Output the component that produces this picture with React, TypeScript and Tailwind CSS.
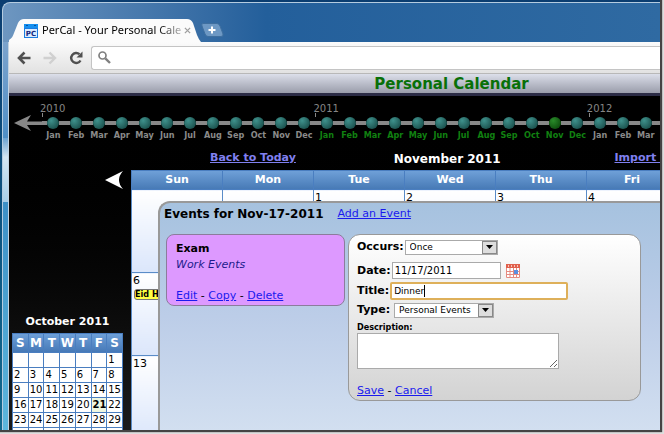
import { useState } from "react";

const MONTHS = ["Jan", "Feb", "Mar", "Apr", "May", "Jun", "Jul", "Aug", "Sep", "Oct", "Nov", "Dec"];
const FIRST_YEAR = 2010;
const TIMELINE = Array.from({ length: 28 }, (_, i) => ({
  label: MONTHS[i % 12],
  year: FIRST_YEAR + Math.floor(i / 12),
  isFirst: i % 12 === 0,
}));

const WEEKDAYS = ["Sun", "Mon", "Tue", "Wed", "Thu", "Fri", "Sat"];
const WEEKS = [
  [null, null, 1, 2, 3, 4, 5],
  [6, 7, 8, 9, 10, 11, 12],
  [13, 14, 15, 16, 17, 18, 19],
];

const MINI_WEEKS = [
  [null, null, null, null, null, null, 1],
  [2, 3, 4, 5, 6, 7, 8],
  [9, 10, 11, 12, 13, 14, 15],
  [16, 17, 18, 19, 20, 21, 22],
  [23, 24, 25, 26, 27, 28, 29],
  [30, 31, null, null, null, null, null],
];

function TabStrip() {
  return (
    <div className="flex h-[39px] shrink-0 items-end pl-1.5">
      <div className="relative h-[23px] w-48 shrink-0">
        <svg viewBox="0 0 192 23" className="absolute inset-0 h-full w-full" aria-hidden="true">
          <path d="M0 23V21C3 19 4 17 5 14L9 4 Q11 0 15 0 H178 Q182 0 184 4L188 16Q190 21 192 23Z" fill="#fbfbfb" />
        </svg>
        <div className="relative flex h-full items-center pl-[15px]">
          <svg viewBox="0 0 14 14" className="h-3.5 w-3.5 shrink-0" aria-hidden="true">
            <rect width="14" height="14" fill="#1b7be0" />
            <rect x="0" y="0" width="14" height="4" fill="#1590f0" />
            <rect x="2" y="1" width="2" height="1" fill="#0a4f9c" />
            <rect x="10" y="1" width="2" height="1" fill="#0a4f9c" />
            <rect x="1" y="5" width="12" height="8" fill="#d8ecff" />
            <text x="7" y="12" textAnchor="middle" fontSize="7" fontWeight="bold" fontFamily="DejaVu Sans" fill="#14247c">PC</text>
          </svg>
          <span className="ml-1 bg-linear-to-r from-black from-80% to-[#bbb] bg-clip-text font-['Noto_Sans','Open_Sans',sans-serif] text-[11px] whitespace-nowrap text-transparent">
            PerCal - Your Personal Cale
          </span>
          <button aria-label="Close tab" className="mr-2.5 ml-auto">
            <svg viewBox="0 0 8 8" className="h-[7px] w-[7px]" stroke="#a0a0a0" strokeWidth="1.5">
              <path d="M1 1l6 6M7 1l-6 6" />
            </svg>
          </button>
        </div>
      </div>
      <button aria-label="New tab" className="mb-[5px] h-[14px] w-[23px]">
        <svg viewBox="0 0 23 14" className="h-full w-full">
          <path d="M2 .5H16Q18 .5 19 3L22 11Q22.500 13.500 20 13.500H7Q5 13.500 4 11L1 3Q0 .5 2 .5Z" fill="#6d98c4" stroke="#3f6f9f" />
          <path d="M11 3.500v7M7.500 7h7" stroke="#fff" strokeWidth="2" />
        </svg>
      </button>
    </div>
  );
}

function Toolbar() {
  return (
    <div className="flex h-8 shrink-0 items-center border-b border-[#b8b8b8] bg-linear-to-b from-[#fbfbfb] to-[#e2e2e2] pl-2">
      <button aria-label="Back">
        <svg viewBox="0 0 14 14" className="h-3.5 w-3.5" fill="none" stroke="#505050" strokeWidth="2.600">
          <path d="M7.500 1.500L2 7l5.500 5.500M2 7h11.500" />
        </svg>
      </button>
      <button aria-label="Forward" className="ml-3">
        <svg viewBox="0 0 14 14" className="h-3.5 w-3.5" fill="none" stroke="#d0d0d0" strokeWidth="2.400">
          <path d="M6.500 1.500L12 7l-5.500 5.500M12 7H.5" />
        </svg>
      </button>
      <button aria-label="Reload" className="ml-3">
        <svg viewBox="0 0 14 14" className="h-3.5 w-3.5">
          <path d="M11.500 9.500A5 5 0 1 1 10.500 3.200" fill="none" stroke="#505050" strokeWidth="2.400" />
          <path d="M13.500 .5V6.500H7.500Z" fill="#505050" />
        </svg>
      </button>
      <label className="ml-2 flex h-6 flex-1 items-center rounded-l-[3px] border-y border-l border-[#c4c4c4] bg-white pl-1.5">
        <svg viewBox="0 0 13 13" className="h-[13px] w-[13px]" fill="none" stroke="#808080">
          <circle cx="4.500" cy="4.500" r="3.500" strokeWidth="1.700" />
          <path d="M7.300 7.300L12 12" strokeWidth="2.400" />
        </svg>
        <input aria-label="Address" className="ml-1 min-w-0 flex-1 text-xs outline-none" />
      </label>
    </div>
  );
}

function Timeline() {
  return (
    <div className="flex h-[49px] shrink-0 overflow-hidden pl-[5px]">
      <button aria-label="Earlier months" className="mt-[19px] h-4 w-7 shrink-0">
        <svg viewBox="0 0 28 16" className="h-full w-full" fill="#888">
          <path d="M0 8L17 0 13 6.500H28V10H13L17 16Z" />
        </svg>
      </button>
      <ol className="-mr-5 grid flex-1 grid-cols-[repeat(28,minmax(0,1fr))] font-['DejaVu_Sans_Condensed','DejaVu_Sans',sans-serif]">
        {TIMELINE.map((m, i) => (
          <li key={i} className="flex flex-col">
            <div className="-ml-0.5 h-[21px] pt-[7px] font-['DejaVu_Sans',sans-serif] text-[10px] leading-3 whitespace-nowrap text-[#858585]">
              {m.isFirst && m.year}
            </div>
            <div className={m.isFirst ? "-mt-1 h-1 w-px bg-[#888]" : "-mt-1 h-1"} />
            <div className="flex h-3 items-center">
              <span className="h-1 flex-1 bg-[#888]" />
              <span
                className={
                  i === 22
                    ? "h-3 w-3 rounded-full bg-radial-[at_35%_30%] from-[#2a8a2a] to-[#053c05]"
                    : "h-3 w-3 rounded-full bg-radial-[at_35%_30%] from-[#3f918c] to-[#103e3b]"
                }
              />
              <span className="h-1 flex-1 bg-[#888]" />
            </div>
            <a
              href="#month"
              className={
                m.year === 2011
                  ? "text-center text-[9px] leading-3 font-bold text-[#118011]"
                  : "text-center text-[9px] leading-3 font-bold text-[#8a8a8a]"
              }
            >
              {m.label}
            </a>
          </li>
        ))}
      </ol>
    </div>
  );
}

function MiniCalendar() {
  return (
    <table className="w-full table-fixed border-collapse text-[10px] leading-3">
      <caption className="pb-[3px] text-center text-[11px] leading-4 font-bold text-white">October 2011</caption>
      <thead>
        <tr className="h-[19px] bg-linear-to-b from-[#6d9fd8] to-[#4477b5] text-xs text-white">
          {WEEKDAYS.map((d) => (
            <th key={d} className="border border-[#4a7ec0] p-0 font-bold">{d[0]}</th>
          ))}
        </tr>
      </thead>
      <tbody className="bg-white">
        {MINI_WEEKS.map((week, i) => (
          <tr key={i} className="h-[15px]">
            {week.map((day, j) => (
              <td
                key={j}
                className={
                  day === 21
                    ? "border border-[#4a7ec0] bg-[#eef6e0] p-0 pl-px font-bold"
                    : "border border-[#4a7ec0] p-0 pl-px"
                }
              >
                {day}
              </td>
            ))}
          </tr>
        ))}
      </tbody>
    </table>
  );
}

function MonthGrid() {
  return (
    <table className="w-[calc(100%+109px)] table-fixed border-collapse text-[11px] leading-4">
      <thead>
        <tr className="h-[19px] bg-linear-to-b from-[#6fa0d8] to-[#4578b4] text-white">
          {WEEKDAYS.map((d) => (
            <th key={d} className="border border-[#4a7ec0] p-0 font-bold">{d}</th>
          ))}
        </tr>
      </thead>
      <tbody>
        {WEEKS.map((week, i) => (
          <tr key={i} className="h-[83px]">
            {week.map((day, j) => (
              <td key={j} className="border border-[#5a8cc8] bg-linear-to-b from-white to-[#dbe6fb] p-0 pl-px align-top">
                {day}
                {day === 6 && (
                  <a href="#eid" className="mr-1 ml-px block rounded-[3px] border border-[#777] bg-[#ffff44] font-['DejaVu_Sans_Condensed','DejaVu_Sans',sans-serif] text-[9px] leading-[9px] font-bold whitespace-nowrap">
                    Eid Holiday
                  </a>
                )}
              </td>
            ))}
          </tr>
        ))}
      </tbody>
    </table>
  );
}

type SelectFieldProps = {
  id: string;
  options: string[];
  className: string;
};

function SelectField({ id, options, className }: SelectFieldProps) {
  return (
    <span className={`relative flex h-[15px] border border-[#aaa] bg-white ${className}`}>
      <select id={id} className="w-full appearance-none pl-1 text-[9px] leading-3 outline-none">
        {options.map((o) => (
          <option key={o}>{o}</option>
        ))}
      </select>
      <span className="pointer-events-none absolute inset-y-0 right-0 flex w-[15px] items-center justify-center border border-[#888] bg-[#ddd]">
        <svg viewBox="0 0 7 4" className="h-1 w-[7px]">
          <path d="M0 0h7L3.500 4Z" fill="#000" />
        </svg>
      </span>
    </span>
  );
}

function EventForm() {
  const [date, setDate] = useState("11/17/2011");
  const [title, setTitle] = useState("Dinner");

  return (
    <form className="h-[167px] w-[293px] rounded-xl border border-[#999] bg-linear-to-b from-white to-[#d3d3d3] px-2 pt-1 text-[11px] leading-4">
      <div className="flex items-center gap-px">
        <label htmlFor="occurs" className="font-bold">Occurs:</label>
        <SelectField id="occurs" options={["Once", "Weekly", "Monthly"]} className="w-[93px]" />
      </div>
      <div className="mt-[7px] flex items-center gap-px">
        <label htmlFor="date" className="font-bold">Date:</label>
        <input id="date" value={date} onChange={(e) => setDate(e.target.value)} className="h-[17px] w-[109px] border border-[#aaa] bg-white px-0.5 text-[10px] outline-none" />
        <button type="button" aria-label="Pick a date" className="ml-1">
          <svg viewBox="0 0 14 14" className="h-3.5 w-3.5">
            <rect width="14" height="14" fill="#fff" />
            <rect width="14" height="4" fill="#e0604c" />
            <path d="M.5 4v9.500h13V4M.5 7.500h13M.5 10.500h13M4 4v10M7.500 4v10M10.500 4v10" fill="none" stroke="#e58a80" />
            <path d="M2.500 1v2M5.500 1v2M8.500 1v2M11.500 1v2" stroke="#f6c4bc" />
            <rect x="8" y="6" width="4" height="4" fill="#5a8ee0" />
          </svg>
        </button>
      </div>
      <div className="mt-[3px] flex items-center gap-px">
        <label htmlFor="title" className="font-bold">Title:</label>
        <span className="flex h-[18px] w-[178px] items-center rounded-[2px] border-2 border-[#deb05a] bg-white pl-0.5">
          <input id="title" value={title} onChange={(e) => setTitle(e.target.value)} className="field-sizing-content text-[9px] outline-none" />
          <span className="h-3 w-px bg-black" />
        </span>
      </div>
      <div className="mt-0.5 flex items-center gap-1">
        <label htmlFor="type" className="font-bold">Type:</label>
        <SelectField id="type" options={["Personal Events", "Work Events"]} className="w-[100px]" />
      </div>
      <label htmlFor="description" className="mt-[3px] block font-['DejaVu_Sans_Condensed','DejaVu_Sans',sans-serif] text-[9px] leading-3 font-bold">
        Description:
      </label>
      <textarea id="description" className="block h-9 w-[202px] resize border border-[#aaa] bg-white" />
      <div className="mt-3.5">
        <a href="#save" className="text-[#1a1aee] underline">Save</a> - <a href="#cancel" className="text-[#1a1aee] underline">Cancel</a>
      </div>
    </form>
  );
}

function EventsPopup() {
  return (
    <section className="absolute top-[31px] -right-3 bottom-0 left-[27px] rounded-tl-xl border-t-2 border-l-2 border-[#999] bg-linear-to-b from-[#a6c2df] via-[#bccde8] to-[#d2dff0] px-1 pt-[3px]">
      <div className="flex items-center gap-3.5">
        <h2 className="text-xs leading-4 font-bold">Events for Nov-17-2011</h2>
        <a href="#add" className="text-[11px] leading-4 text-[#1a1aee] underline">Add an Event</a>
      </div>
      <div className="mt-3 flex items-start gap-[3px] pl-0.5">
        <article className="h-[72px] w-[179px] shrink-0 rounded-lg border border-[#8c7c9c] bg-[#dd99ff] px-[9px] pt-1.5 text-[11px] leading-4">
          <h3 className="font-bold">Exam</h3>
          <p className="text-[#1c1c8c] italic">Work Events</p>
          <p className="mt-[15px]">
            <a href="#edit" className="text-[#1a1aee] underline">Edit</a> - <a href="#copy" className="text-[#1a1aee] underline">Copy</a> -{" "}
            <a href="#delete" className="text-[#1a1aee] underline">Delete</a>
          </p>
        </article>
        <EventForm />
      </div>
    </section>
  );
}

export default function App() {
  return (
    <div className="h-screen overflow-hidden bg-[#dedede] pr-1 pb-1 font-['DejaVu_Sans',Verdana,sans-serif] text-black">
      <div className="h-full bg-linear-to-b from-[#0b3d70] to-[#12698e] pt-0.5 pl-0.5 shadow-[1px_1px_1px_1px_#444]">
        <div className="flex h-full flex-col overflow-hidden rounded-tl-lg border-t border-l border-[#b5cce0] bg-linear-to-r from-[#6d96c0] via-[#235f9b] via-40% to-[#2f6aa2]">
          <TabStrip />
          <div className="flex min-h-0 flex-1">
            <div className="flex w-1.5 shrink-0 flex-col border-r border-[#c4d4e2]">
              <div className="h-24 bg-linear-to-b from-[#7ba3cd] to-[#4f8fc6]" />
              <div className="h-16 bg-linear-to-b from-[#6aa2d0] via-[#d4e6f2] via-30% to-[#a8cfe8]" />
              <div className="flex-1 bg-linear-to-b from-[#3d90c6] to-[#5cb6dc]" />
            </div>
            <div className="flex min-w-0 flex-1 flex-col">
              <Toolbar />
              <header className="h-[22px] shrink-0 border-b-3 border-[#2b2b45] bg-linear-to-b from-[#dcdfea] to-[#9a9dab] text-center">
                <h1 className="pl-[234px] text-[15px] leading-5 font-bold text-[#087008]">Personal Calendar</h1>
              </header>
              <main className="flex min-h-0 flex-1 flex-col bg-linear-to-b from-black to-[#1c1c1c]">
                <Timeline />
                <div className="flex min-h-0 flex-1">
                  <aside className="flex w-[122px] shrink-0 flex-col overflow-hidden">
                    <button aria-label="Previous month" className="mt-[26px] mr-2 h-[18px] w-[18px] shrink-0 self-end">
                      <svg viewBox="0 0 18 18" className="h-full w-full" fill="#fff">
                        <path d="M0 9L18 0Q10 9 18 18Z" />
                      </svg>
                    </button>
                    <div className="mt-[125px] pr-2 pl-[3px]">
                      <MiniCalendar />
                    </div>
                  </aside>
                  <div className="flex min-w-0 flex-1 flex-col overflow-hidden">
                    <nav className="flex h-[25px] shrink-0 items-center pt-0.5 text-[11px] font-bold whitespace-nowrap">
                      <a href="#today" className="ml-[79px] text-[#8080f0] underline">Back to Today</a>
                      <h2 className="flex-1 pr-4 text-center text-xs text-white">November 2011</h2>
                      <a href="#import" className="text-[#8080f0] underline">Import&nbsp;</a>
                    </nav>
                    <div className="relative min-h-0 flex-1">
                      <div className="h-full overflow-hidden">
                        <MonthGrid />
                      </div>
                      <EventsPopup />
                    </div>
                  </div>
                </div>
              </main>
            </div>
          </div>
        </div>
      </div>
    </div>
  );
}
